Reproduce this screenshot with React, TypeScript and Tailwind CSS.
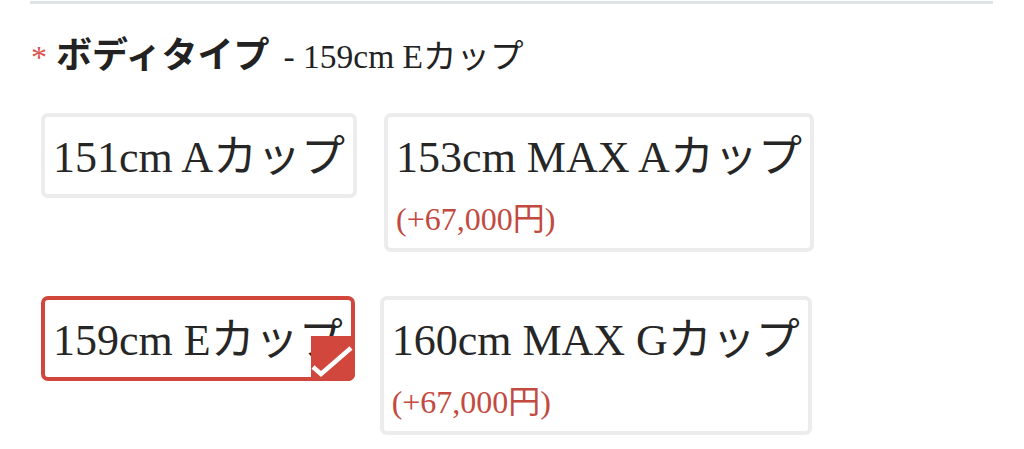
import React from "react";

const serif = { fontFamily: '"Liberation Serif", "Noto Sans CJK JP", serif' };

function Card({
  label,
  price,
  selected,
}: {
  label: string;
  price?: string;
  selected?: boolean;
}) {
  return (
    <div
      className={
        "relative rounded-[7px] border-4 px-2 pt-[12px] " +
        (price ? "pb-[5px] " : "pb-[8px] ") +
        (selected ? "border-[#d1473e]" : "border-[#ececec]")
      }
    >
      <div className="text-[44px] leading-[57px] text-[#262626] whitespace-nowrap">{label}</div>
      {price && (
        <div className="mt-[9px] text-[32px] leading-[48px] text-[#c24a40] whitespace-nowrap">{price}</div>
      )}
      {selected && (
        <div className="absolute right-[-4px] bottom-[-4px] h-[45px] w-[44px] rounded-br-[7px] bg-[#d1473e]">
          <svg width="44" height="45" viewBox="0 0 44 45" className="block">
            <path d="M2 31 L10 38 L40 12" fill="none" stroke="#ffffff" strokeWidth="4.5" strokeLinejoin="miter" />
          </svg>
        </div>
      )}
    </div>
  );
}

export default function App() {
  return (
    <div className="h-[449px] w-[1024px] overflow-hidden bg-white" style={serif}>
      <div className="ml-[30px] mt-[1px] w-[963px] border-t-[3px] border-[#dfe5e5]" />
      <div className="ml-[31px] mt-[30px] flex items-baseline whitespace-nowrap">
        <span className="mr-[9px] text-[32px] leading-[40px] text-[#d9534f]">*</span>
        <span className="text-[36px] font-bold leading-[44px] text-[#222]">ボディタイプ</span>
        <span className="ml-[14px] text-[33.5px] leading-[44px] text-[#222]">- 159cm Eカップ</span>
      </div>
      <div className="ml-[41px] mt-[34px] flex flex-col gap-[44px]">
        <div className="flex items-start gap-[27px]">
          <Card label="151cm Aカップ" />
          <Card label="153cm MAX Aカップ" price="(+67,000円)" />
        </div>
        <div className="flex items-start gap-[25px]">
          <Card label="159cm Eカップ" selected />
          <Card label="160cm MAX Gカップ" price="(+67,000円)" />
        </div>
      </div>
    </div>
  );
}
